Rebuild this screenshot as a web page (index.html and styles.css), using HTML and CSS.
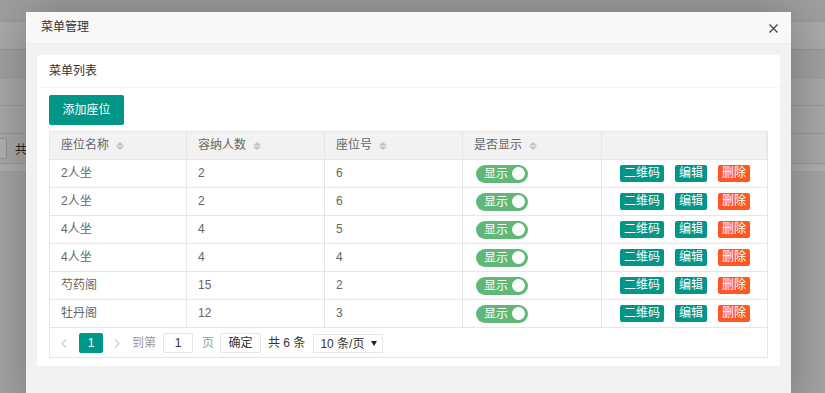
FILE: index.html
```html
<!DOCTYPE html>
<html lang="zh-CN">
<head>
    <meta charset="UTF-8">
    <meta name="viewport" content="width=device-width, initial-scale=1.0">
    <title>菜单管理</title>
    <link rel="stylesheet" href="styles.css">
</head>
<body>
    <!-- Page behind the dialog -->
    <div class="page">
        <div class="page-top"></div>
        <div class="page-row page-row-light"></div>
        <div class="page-row page-row-head"></div>
        <div class="page-row"></div>
        <div class="page-row"></div>
        <div class="page-pager">
            <span class="page-input"></span>
            <span class="page-total">共</span>
        </div>
        <div class="page-foot"></div>
    </div>
    <div class="shade"></div>

    <!-- Dialog -->
    <div class="layer">
        <div class="layer-title">
            菜单管理
            <span class="layer-close">
                <svg width="9" height="9" viewBox="0 0 9 9"><path d="M0.5 0.5 L8.5 8.5 M8.5 0.5 L0.5 8.5" stroke="#444" stroke-width="1.3" fill="none"/></svg>
            </span>
        </div>
        <div class="layer-content">
            <div class="card">
                <div class="card-header">菜单列表</div>
                <div class="card-body">
                    <button class="btn">添加座位</button>

                    <div class="table-box">
                        <table class="table">
                            <colgroup>
                                <col style="width: 137px">
                                <col style="width: 138px">
                                <col style="width: 138px">
                                <col style="width: 139px">
                                <col>
                            </colgroup>
                            <thead>
                                <tr>
                                    <th>座位名称<i class="sort"><svg width="8" height="8" viewBox="0 0 8 8"><path d="M0 3.5 L4 0 L8 3.5 Z M0 4.5 L8 4.5 L4 8 Z" fill="#c2c2c2"/></svg></i></th>
                                    <th>容纳人数<i class="sort"><svg width="8" height="8" viewBox="0 0 8 8"><path d="M0 3.5 L4 0 L8 3.5 Z M0 4.5 L8 4.5 L4 8 Z" fill="#c2c2c2"/></svg></i></th>
                                    <th>座位号<i class="sort"><svg width="8" height="8" viewBox="0 0 8 8"><path d="M0 3.5 L4 0 L8 3.5 Z M0 4.5 L8 4.5 L4 8 Z" fill="#c2c2c2"/></svg></i></th>
                                    <th>是否显示<i class="sort"><svg width="8" height="8" viewBox="0 0 8 8"><path d="M0 3.5 L4 0 L8 3.5 Z M0 4.5 L8 4.5 L4 8 Z" fill="#c2c2c2"/></svg></i></th>
                                    <th class="th-last"></th>
                                </tr>
                            </thead>
                            <tbody>
                                <tr>
                                    <td>2人坐</td><td>2</td><td>6</td>
                                    <td><span class="switch">显示<i></i></span></td>
                                    <td><div class="ops"><span class="btn-xs">二维码</span><span class="btn-xs">编辑</span><span class="btn-xs btn-danger">删除</span></div></td>
                                </tr>
                                <tr>
                                    <td>2人坐</td><td>2</td><td>6</td>
                                    <td><span class="switch">显示<i></i></span></td>
                                    <td><div class="ops"><span class="btn-xs">二维码</span><span class="btn-xs">编辑</span><span class="btn-xs btn-danger">删除</span></div></td>
                                </tr>
                                <tr>
                                    <td>4人坐</td><td>4</td><td>5</td>
                                    <td><span class="switch">显示<i></i></span></td>
                                    <td><div class="ops"><span class="btn-xs">二维码</span><span class="btn-xs">编辑</span><span class="btn-xs btn-danger">删除</span></div></td>
                                </tr>
                                <tr>
                                    <td>4人坐</td><td>4</td><td>4</td>
                                    <td><span class="switch">显示<i></i></span></td>
                                    <td><div class="ops"><span class="btn-xs">二维码</span><span class="btn-xs">编辑</span><span class="btn-xs btn-danger">删除</span></div></td>
                                </tr>
                                <tr>
                                    <td>芍药阁</td><td>15</td><td>2</td>
                                    <td><span class="switch">显示<i></i></span></td>
                                    <td><div class="ops"><span class="btn-xs">二维码</span><span class="btn-xs">编辑</span><span class="btn-xs btn-danger">删除</span></div></td>
                                </tr>
                                <tr>
                                    <td>牡丹阁</td><td>12</td><td>3</td>
                                    <td><span class="switch">显示<i></i></span></td>
                                    <td><div class="ops"><span class="btn-xs">二维码</span><span class="btn-xs">编辑</span><span class="btn-xs btn-danger">删除</span></div></td>
                                </tr>
                            </tbody>
                        </table>

                        <!-- Pager -->
                        <div class="table-page">
                            <span class="pg-arrow pg-prev"><svg width="6" height="9" viewBox="0 0 6 9"><path d="M5 0.5 L1 4.5 L5 8.5" stroke="#cfcfcf" stroke-width="1.2" fill="none"/></svg></span>
                            <span class="pg-curr">1</span>
                            <span class="pg-arrow pg-next"><svg width="6" height="9" viewBox="0 0 6 9"><path d="M1 0.5 L5 4.5 L1 8.5" stroke="#cfcfcf" stroke-width="1.2" fill="none"/></svg></span>
                            <span class="pg-label pg-goto">到第</span>
                            <span class="pg-input">1</span>
                            <span class="pg-label pg-unit">页</span>
                            <span class="pg-btn">确定</span>
                            <span class="pg-count">共 6 条</span>
                            <span class="pg-limit">10 条/页<i></i></span>
                        </div>
                    </div>
                </div>
            </div>
        </div>
    </div>
</body>
</html>
```

FILE: styles.css
```css
body {
    margin: 0;
    padding: 0;
    width: 825px;
    height: 393px;
    overflow: hidden;
    position: relative;
    background: #ececec;
    font-family: "Liberation Sans", "Noto Sans CJK SC", sans-serif;
    font-size: 12px;
    color: #666;
}

/* Page behind the shade */
.page-top {
    height: 21px;
    background: #e5e5e5;
}

.page-row {
    height: 27px;
    border-top: 1px solid #dbdbdb;
    background: #f3f3f3;
}

.page-row-light {
    background: #f5f5f5;
}

.page-row-head {
    background: #e9e9e9;
}

.page-pager {
    height: 29px;
    border-top: 1px solid #dbdbdb;
    border-bottom: 1px solid #dbdbdb;
    background: #f3f3f3;
    display: flex;
    align-items: center;
}

.page-input {
    width: 20px;
    height: 19px;
    margin-left: -15px;
    border: 1px solid #d2d2d2;
    border-radius: 2px;
    background: #fff;
}

.page-total {
    margin-left: 8px;
    color: #333;
}

.page-foot {
    height: 7px;
    background: #fbfbfb;
}

.shade {
    position: absolute;
    top: 0;
    left: 0;
    right: 0;
    bottom: 0;
    background: rgba(0, 0, 0, 0.3);
}

/* Dialog */
.layer {
    position: absolute;
    left: 26px;
    top: 12px;
    width: 765px;
    height: 400px;
    background: #f2f2f2;
    box-shadow: 1px 1px 50px rgba(0, 0, 0, 0.3);
}

.layer-title {
    position: relative;
    height: 31px;
    line-height: 30px;
    padding: 0 15px;
    background: #f8f8f8;
    border-bottom: 1px solid #eee;
    color: #333;
}

.layer-close {
    position: absolute;
    right: 13px;
    top: 12px;
    width: 9px;
    height: 9px;
    display: flex;
}

.layer-content {
    padding: 11px;
}

.card {
    background: #fff;
    border-radius: 2px;
}

.card-header {
    height: 32px;
    line-height: 32px;
    padding: 0 12px;
    border-bottom: 1px solid #f6f6f6;
    color: #333;
}

.card-body {
    padding: 7px 12px 8px;
}

.btn {
    display: block;
    height: 30px;
    line-height: 30px;
    padding: 0 13.5px;
    border: none;
    border-radius: 2px;
    background: #009688;
    color: #fff;
    font-family: inherit;
    font-size: 12px;
}

/* Table */
.table-box {
    margin-top: 6px;
    border: 1px solid #e6e6e6;
}

.table {
    width: 100%;
    table-layout: fixed;
    border-collapse: separate;
    border-spacing: 0;
}

.table th,
.table td {
    height: 27px;
    padding: 0 11px;
    line-height: 27px;
    text-align: left;
    font-weight: normal;
    white-space: nowrap;
    border-right: 1px solid #e6e6e6;
    border-bottom: 1px solid #e6e6e6;
    color: #666;
}

.table th {
    background: #f2f2f2;
}

.table td:last-child {
    border-right: none;
}

.sort {
    display: inline-block;
    margin-left: 7px;
    vertical-align: -1px;
    line-height: 0;
}

.switch {
    position: relative;
    display: inline-block;
    vertical-align: middle;
    width: 52px;
    height: 18px;
    margin-left: 2px;
    padding-left: 8px;
    box-sizing: border-box;
    line-height: 18px;
    border-radius: 9px;
    background: #5FB878;
    color: #fff;
}

.switch i {
    position: absolute;
    right: 3px;
    top: 2.5px;
    width: 13px;
    height: 13px;
    border-radius: 50%;
    background: #fff;
}

.ops {
    display: flex;
    justify-content: center;
    align-items: center;
    gap: 11px;
    height: 27px;
    padding-left: 1px;
}

.btn-xs {
    height: 17px;
    line-height: 17px;
    padding: 0 4px;
    border-radius: 2px;
    background: #009688;
    color: #fff;
}

.btn-danger {
    background: #FF5722;
}

/* Pager */
.table-page {
    height: 29px;
    padding-top: 5px;
    box-sizing: border-box;
    display: flex;
    align-items: flex-start;
    line-height: 20px;
}

.pg-arrow {
    width: 24px;
    height: 20px;
    display: flex;
    align-items: center;
    justify-content: center;
}

.pg-prev {
    margin-left: 2px;
}

.pg-next {
    margin-left: 2px;
}

.pg-curr {
    width: 24px;
    height: 20px;
    margin-left: 3px;
    text-align: center;
    border-radius: 2px;
    background: #009688;
    color: #fff;
}

.pg-label {
    color: #999;
}

.pg-goto {
    margin-left: 3px;
}

.pg-input {
    width: 30px;
    height: 20px;
    margin-left: 7px;
    box-sizing: border-box;
    border: 1px solid #e6e6e6;
    border-radius: 2px;
    line-height: 18px;
    text-align: center;
    color: #333;
}

.pg-unit {
    margin-left: 9px;
}

.pg-btn {
    width: 41px;
    height: 20px;
    margin-left: 6px;
    box-sizing: border-box;
    border: 1px solid #e6e6e6;
    border-radius: 2px;
    line-height: 18px;
    text-align: center;
    color: #333;
}

.pg-count {
    margin-left: 7px;
    color: #333;
}

.pg-limit {
    position: relative;
    width: 70px;
    height: 19px;
    margin-left: 8px;
    margin-top: 1px;
    padding-left: 6px;
    box-sizing: border-box;
    border: 1px solid #e6e6e6;
    line-height: 18px;
    color: #333;
}

.pg-limit i {
    position: absolute;
    right: 5px;
    top: 6px;
    border-left: 3px solid transparent;
    border-right: 3px solid transparent;
    border-top: 5px solid #222;
}
```
